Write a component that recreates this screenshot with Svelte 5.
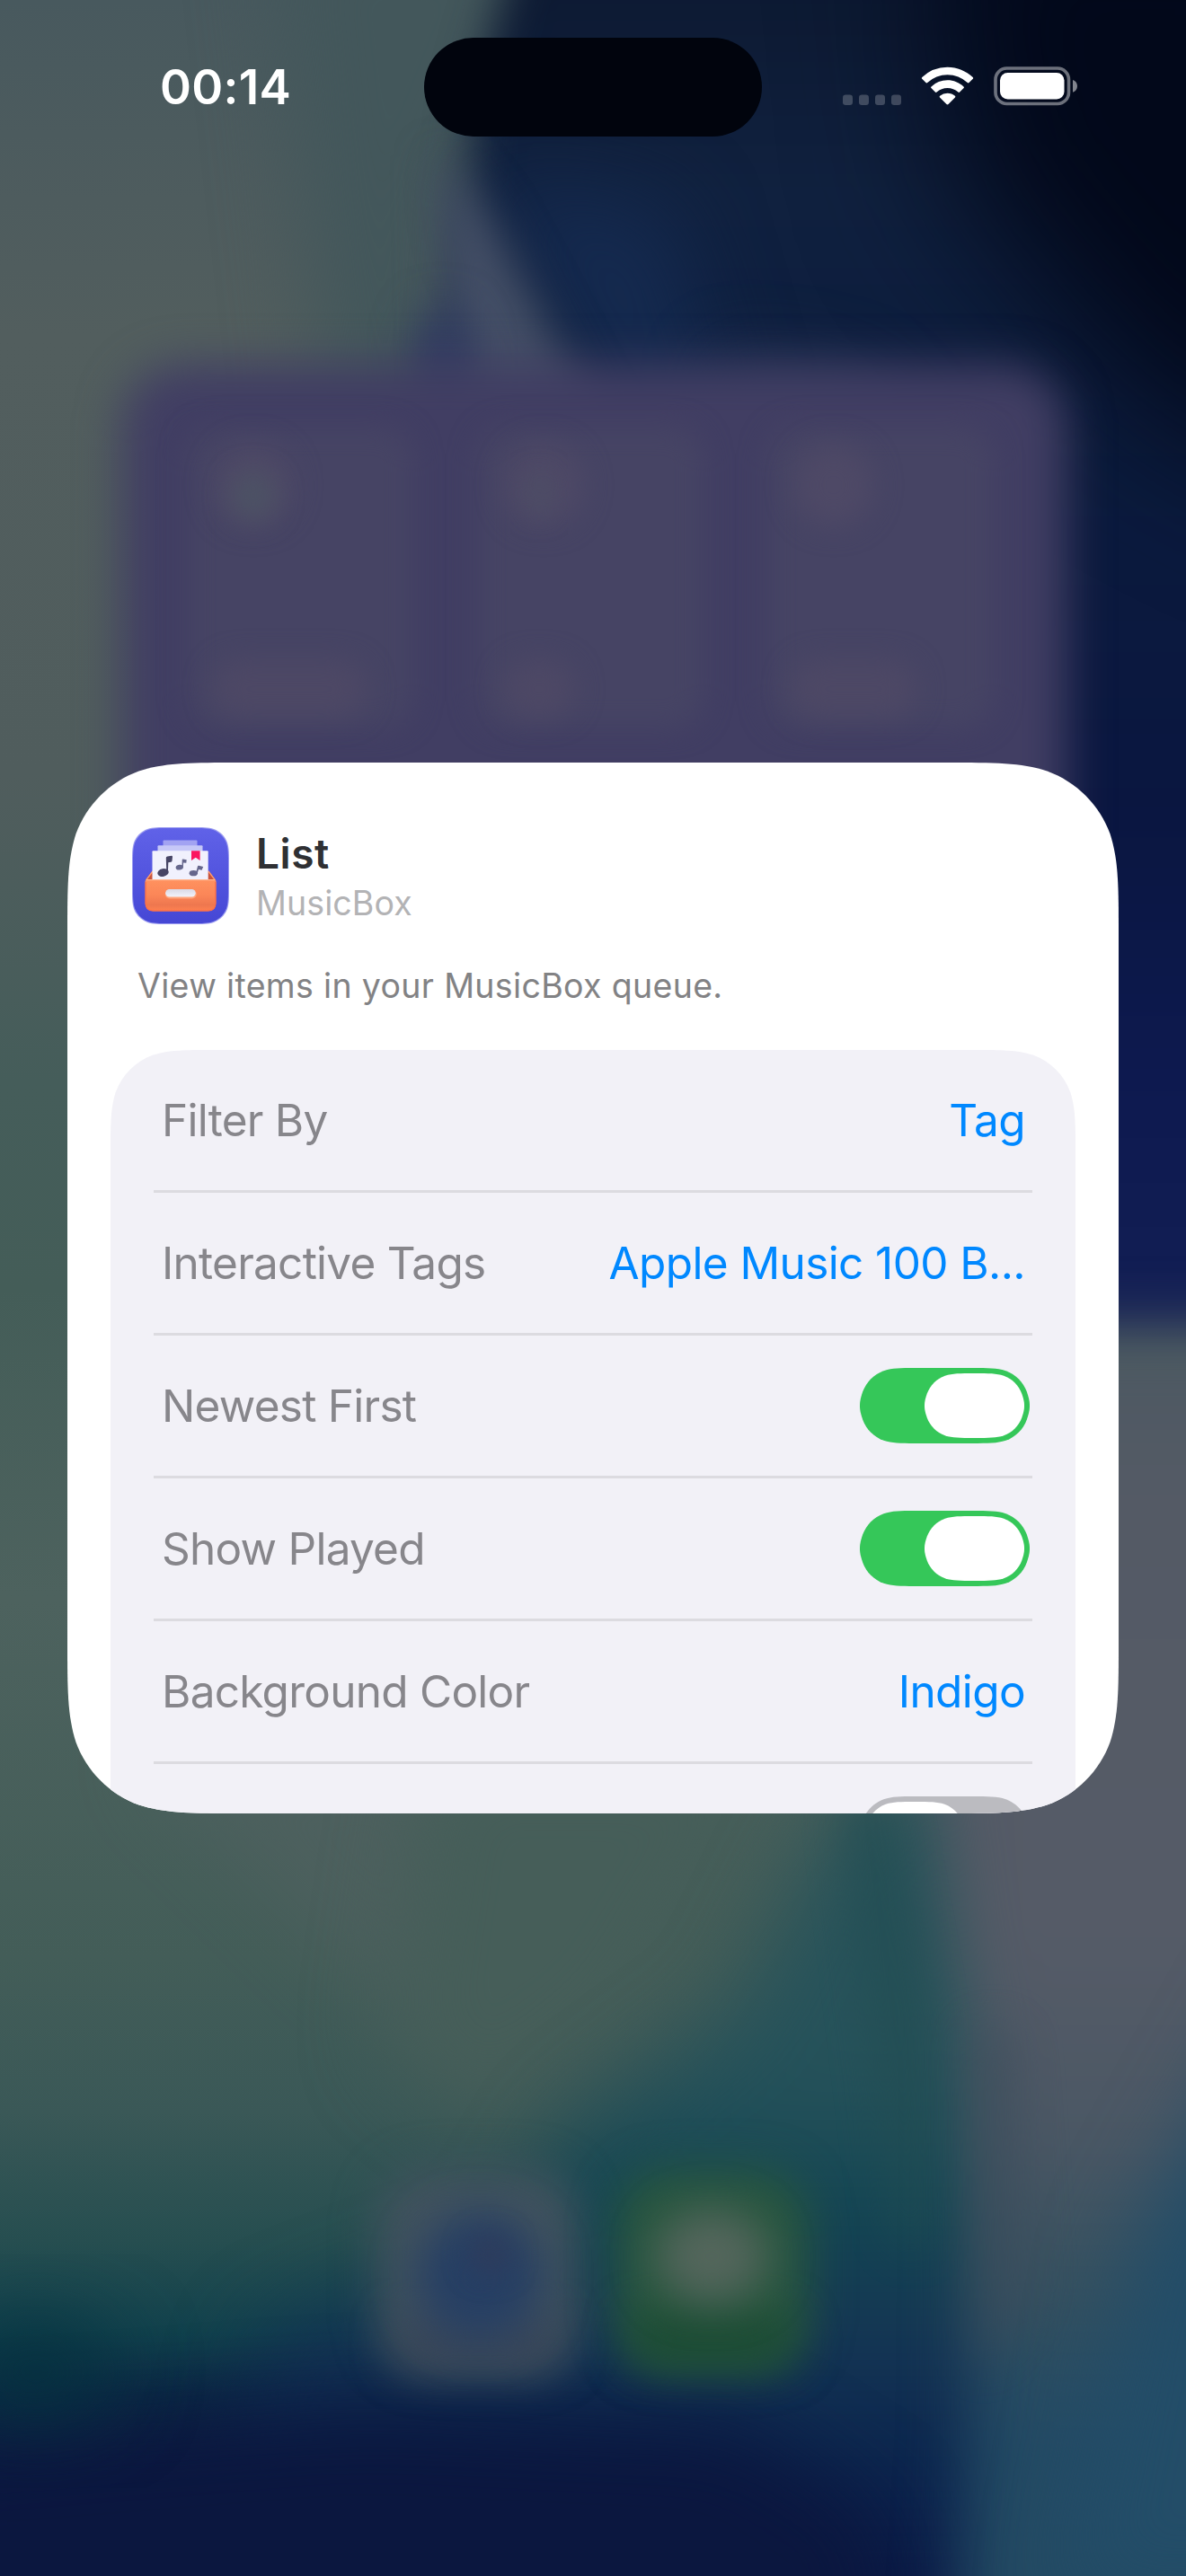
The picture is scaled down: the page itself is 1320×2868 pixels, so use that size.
<script>
  // Continuous-curvature rounded rectangle; the corner easing is shortened
  // on any side that is too short to hold it.
  function squircle(w, h, r, open = false) {
    const ex = Math.min(1.528665 * r, w / 2);
    const ey = Math.min(1.528665 * r, h / 2);
    const mx = Math.min(1.088493 * r, ex * 0.9);
    const my = Math.min(1.088493 * r, ey * 0.93);
    const nx = Math.min(0.868407 * r, mx);
    const ny = Math.min(0.868407 * r, my * 0.92);
    const a = 0.07491 * r;
    const b = 0.631494 * r;
    const c = 0.169059 * r;
    const d = 0.372824 * r;
    const top =
      `M${ex},0 H${w - ex} C${w - mx},0 ${w - nx},0 ${w - b},${a} ` +
      `C${w - d},${c} ${w - c},${d} ${w - a},${b} C${w},${ny} ${w},${my} ${w},${ey} `;
    const bottom = open
      ? `V${h} H0 `
      : `V${h - ey} C${w},${h - my} ${w},${h - ny} ${w - a},${h - b} ` +
        `C${w - c},${h - d} ${w - d},${h - c} ${w - b},${h - a} C${w - nx},${h} ${w - mx},${h} ${w - ex},${h} ` +
        `H${ex} C${mx},${h} ${nx},${h} ${b},${h - a} C${d},${h - c} ${c},${h - d} ${a},${h - b} C0,${h - ny} 0,${h - my} 0,${h - ey} `;
    return top + bottom + `V${ey} C0,${my} 0,${ny} ${a},${b} C${c},${d} ${d},${c} ${b},${a} C${nx},0 ${mx},0 ${ex},0 Z`;
  }

  const cardClip = `path("${squircle(1170, 1170, 126)}")`;
  const panelClip = `path("${squircle(1074, 850, 75, true)}")`;
  const track = squircle(189, 84, 42);
  const knob = squircle(111, 72, 36);

  const rows = [
    { label: 'Filter By', value: 'Tag' },
    { label: 'Interactive Tags', value: 'Apple Music 100 B...' },
    { label: 'Newest First', on: true },
    { label: 'Show Played', on: true },
    { label: 'Background Color', value: 'Indigo' },
    { label: '', on: false }
  ];
  const tiles = [0, 1, 2];
</script>

<div class="phone">
  <svg class="wallpaper" viewBox="0 0 1320 2868" color-interpolation-filters="sRGB" aria-hidden="true">
    <defs>
      <linearGradient id="left" x1="0" y1="0" x2="0" y2="2868" gradientUnits="userSpaceOnUse">
        <stop offset="0" stop-color="#48595e" />
        <stop offset=".13" stop-color="#525e5e" />
        <stop offset=".3" stop-color="#505d5d" />
        <stop offset=".42" stop-color="#455d5a" />
        <stop offset=".5" stop-color="#445d58" />
        <stop offset=".62" stop-color="#4d625e" />
        <stop offset=".76" stop-color="#435d58" />
        <stop offset=".82" stop-color="#3a5857" />
        <stop offset=".87" stop-color="#264e50" />
        <stop offset=".905" stop-color="#12424d" />
        <stop offset=".93" stop-color="#0b2a45" />
        <stop offset=".96" stop-color="#0e1c42" />
        <stop offset="1" stop-color="#0a1645" />
      </linearGradient>
      <linearGradient id="night" x1="0" y1="0" x2="0" y2="1500" gradientUnits="userSpaceOnUse">
        <stop offset="0" stop-color="#0d1a33" />
        <stop offset=".14" stop-color="#10213f" />
        <stop offset=".35" stop-color="#0b1b3d" />
        <stop offset=".6" stop-color="#0a1640" />
        <stop offset=".8" stop-color="#0d194f" />
        <stop offset="1" stop-color="#131f55" />
      </linearGradient>
      <linearGradient id="edge" x1="0" y1="1450" x2="0" y2="2868" gradientUnits="userSpaceOnUse">
        <stop offset="0" stop-color="#4a5861" />
        <stop offset=".15" stop-color="#545a65" />
        <stop offset=".5" stop-color="#555b67" />
        <stop offset=".66" stop-color="#4a5764" />
        <stop offset=".78" stop-color="#34505f" />
        <stop offset=".88" stop-color="#234a64" />
        <stop offset="1" stop-color="#234a63" />
      </linearGradient>
      <linearGradient id="teal" x1="0" y1="2000" x2="0" y2="2868" gradientUnits="userSpaceOnUse">
        <stop offset="0" stop-color="#2a545a" />
        <stop offset=".35" stop-color="#26525a" />
        <stop offset=".55" stop-color="#124452" />
        <stop offset=".7" stop-color="#153554" />
        <stop offset=".82" stop-color="#0c284f" />
        <stop offset="1" stop-color="#0a1b48" />
      </linearGradient>
      <filter id="b14" x="-80%" y="-80%" width="260%" height="260%"><feGaussianBlur stdDeviation="15" /></filter>
      <filter id="b25" x="-80%" y="-80%" width="260%" height="260%"><feGaussianBlur stdDeviation="24" /></filter>
      <filter id="b35" x="-80%" y="-80%" width="260%" height="260%"><feGaussianBlur stdDeviation="34" /></filter>
      <filter id="b45" x="-80%" y="-80%" width="260%" height="260%"><feGaussianBlur stdDeviation="45" /></filter>
      <filter id="b80" x="-80%" y="-80%" width="260%" height="260%"><feGaussianBlur stdDeviation="80" /></filter>
    </defs>
    <rect width="1320" height="2868" fill="url(#left)" />
    <!-- pale green slope -->
    <path d="M300 -100 H640 L500 250 V600 H380 Z" fill="#43575b" filter="url(#b45)" />
    <path d="M150 1950 L500 1950 L560 2300 L400 2200 Z" fill="#506160" opacity=".7" filter="url(#b45)" />
    <path d="M480 1950 H880 L700 2250 L540 2370 L430 2280 Z" fill="#465e59" filter="url(#b45)" />
    <!-- night sky -->
    <path d="M600 -150 L530 100 L510 300 L470 620 V1500 H1480 V-150 Z" fill="url(#night)" filter="url(#b25)" />
    <path d="M1020 -150 H1500 V560 L1280 450 L1060 200 Z" fill="#02081a" filter="url(#b80)" />
    <path d="M540 200 L740 230 L860 620 L720 560 Z" fill="#152a4f" filter="url(#b45)" />
    <path d="M490 170 L545 240 L770 660 H500 Z" fill="#444f66" filter="url(#b25)" />
    <path d="M800 400 L960 430 L1120 640 H840 Z" fill="#273858" filter="url(#b45)" opacity=".9" />
    <ellipse cx="492" cy="400" rx="32" ry="56" fill="#303b62" filter="url(#b25)" />
    <!-- lower right -->
    <path d="M1040 1950 L920 2040 L820 2240 L640 2370 L560 2500 L300 2600 L200 2900 H1200 V1950 Z" fill="url(#teal)" filter="url(#b45)" />
    <path d="M-100 2720 L400 2680 L820 2700 L980 2800 L1000 3000 H-100 Z" fill="#0b173f" filter="url(#b45)" />
    <path d="M1000 1480 H1520 V3050 H1055 L1078 2700 L1082 2300 L1062 2150 L1040 2000 Z" fill="url(#edge)" filter="url(#b35)" />
    <path d="M940 2000 L985 2000 L1030 2250 L1030 2500 L1000 2500 Z" fill="#224d53" opacity=".7" filter="url(#b25)" />
    <path d="M1440 2180 L1260 2500 L1180 2900 H1450 Z" fill="#234d68" filter="url(#b45)" />
    <path d="M1080 2260 L1130 2260 L1150 2560 L1090 2640 Z" fill="#3f4c5c" opacity=".5" filter="url(#b25)" />
    <ellipse cx="40" cy="2640" rx="90" ry="50" fill="#05313f" filter="url(#b45)" />
    <!-- home screen widget -->
    <rect x="135" y="405" width="1053" height="900" rx="70" fill="#413e63" filter="url(#b25)" />
    {#each tiles as i}
      <g transform="translate({i * 323} 0)">
        <rect x="208" y="475" width="252" height="336" rx="36" fill="#464464" filter="url(#b14)" />
        <ellipse cx="282" cy="540" rx="44" ry="46" fill="#4e4966" filter="url(#b14)" />
      </g>
    {/each}
    <ellipse cx="282" cy="552" rx="24" ry="26" fill="#4c5364" filter="url(#b14)" />
    <ellipse cx="600" cy="550" rx="12" ry="22" fill="#4c4f65" filter="url(#b14)" />
    <rect x="236" y="735" width="172" height="64" rx="32" fill="#4d4865" filter="url(#b14)" />
    <rect x="560" y="735" width="80" height="64" rx="32" fill="#4d4865" filter="url(#b14)" />
    <rect x="880" y="735" width="140" height="64" rx="32" fill="#4d4865" filter="url(#b14)" />
    <!-- dock -->
    <rect x="420" y="2415" width="224" height="224" rx="60" fill="#42535e" filter="url(#b25)" />
    <rect x="440" y="2580" width="185" height="55" rx="25" fill="#394558" filter="url(#b25)" />
    <circle cx="534" cy="2535" r="72" fill="#263f64" filter="url(#b25)" />
    <circle cx="545" cy="2510" r="22" fill="#2e3c5c" filter="url(#b14)" />
    <rect x="684" y="2415" width="216" height="222" rx="60" fill="#28563f" filter="url(#b25)" />
    <rect x="700" y="2575" width="184" height="60" rx="25" fill="#1c4c34" filter="url(#b25)" />
    <ellipse cx="792" cy="2512" rx="62" ry="52" fill="#54665c" filter="url(#b25)" />
  </svg>

  <header class="status">
    <span class="time">00:14</span>
    <span class="island"></span>
    <svg class="indicators" viewBox="0 0 264 46" aria-label="Wi-Fi and battery">
      <g fill="#fff" fill-opacity=".21">
        <rect x="1" y="31.5" width="11" height="11.5" rx="3.2" />
        <rect x="19" y="31.5" width="11" height="11.5" rx="3.2" />
        <rect x="37" y="31.5" width="11" height="11.5" rx="3.2" />
        <rect x="55" y="31.5" width="11" height="11.5" rx="3.2" />
      </g>
      <g fill="#fff">
        <path d="M117.5 .8c10.800 0 20.700 4.300 28.200 11.200.6.600.6 1.200.1 1.700l-4.300 4.400c-.5.500-1.200.5-1.700 0a32.400 32.400 0 0 0-44.600 0c-.5.500-1.200.5-1.700 0l-4.300-4.400c-.5-.5-.5-1.100.1-1.700A41.500 41.500 0 0 1 117.500.8Z" />
        <path d="M117.500 15.300c6.900 0 13.200 2.700 18 7.100.6.500.6 1.200.1 1.700l-4.500 4.500c-.5.500-1.100.5-1.700 0a17.600 17.600 0 0 0-23.800 0c-.6.500-1.200.5-1.700 0l-4.500-4.500c-.5-.5-.5-1.200.1-1.700a26.700 26.700 0 0 1 18-7.100Z" />
        <path d="M117.500 29.700c3.200 0 6.100 1.200 8.400 3.100.6.500.6 1.100.1 1.700l-7.500 7.600c-.6.600-1.400.6-2 0l-7.500-7.600c-.5-.6-.5-1.200.1-1.700a13 13 0 0 1 8.400-3.100Z" />
      </g>
      <rect x="171" y="2" width="81.500" height="39.500" rx="12.500" fill="none" stroke="#fff" stroke-opacity=".42" stroke-width="3.600" />
      <rect x="176" y="7" width="71.500" height="29.500" rx="8.500" fill="#fff" />
      <path d="M257 15c3 1 5 3.600 5 6.900s-2 5.800-5 6.800Z" fill="#fff" fill-opacity=".5" />
    </svg>
  </header>

  <main class="card" style:clip-path={cardClip}>
    <div class="app">
      <svg class="icon" viewBox="0 0 108 108" aria-label="MusicBox">
        <defs>
          <linearGradient id="bg" x1="0" y1="0" x2="0" y2="1">
            <stop offset="0" stop-color="#6062e8" />
            <stop offset="1" stop-color="#4547d5" />
          </linearGradient>
          <linearGradient id="box" x1="0" y1="0" x2="0" y2="1">
            <stop offset="0" stop-color="#ff925f" />
            <stop offset=".5" stop-color="#fb8658" />
            <stop offset=".8" stop-color="#ee774f" />
            <stop offset="1" stop-color="#ff8150" />
          </linearGradient>
          <linearGradient id="slot" x1="0" y1="0" x2="0" y2="1">
            <stop offset="0" stop-color="#d9d9e6" />
            <stop offset="1" stop-color="#f3f3fa" />
          </linearGradient>
        </defs>
        <path d={squircle(108, 108, 27)} fill="#9a9bf0" />
        <path d={squircle(106, 106, 26.500)} transform="translate(1 1)" fill="url(#bg)" />
        <rect x="34.500" y="14.500" width="38" height="8" rx="1" fill="#a2a3f2" />
        <rect x="28.500" y="20.300" width="50" height="8" rx="1" fill="#c6c8f7" />
        <path d="M15 59 L23 48.500 H85 L93 59Z" fill="#c9533c" />
        <path d="M15.500 59 L23 49 M92.500 59 L85 49" stroke="#ff9c6c" stroke-width="1.300" />
        <rect x="22.500" y="26.300" width="62.200" height="34" rx="1" fill="#f1f1fd" />
        <path d="M66 26.300h9.600v10.600l-4.800-3.200-4.800 3.200Z" fill="#fb1560" />
        <g fill="#474565">
          <ellipse cx="34.500" cy="50.500" rx="6.300" ry="4.400" transform="rotate(-12 34.500 50.500)" />
          <path d="M38.300 50.500 L37.800 34q0-1.500 1.500-1.600l4.600-.6q1.200 0 1.100 1.300l-.5 4.500q-.1 1-1.200 1.200l-3 .4-.4 11.300Z" />
        </g>
        <g fill="#66678c">
          <ellipse cx="52.800" cy="44.600" rx="4.200" ry="2.900" transform="rotate(-8 52.800 44.600)" />
          <path d="M55.500 44.500 L55.700 36.500q0-1 1-.9l4 .6-.4 3.600-3.200-.2-.3 5Z" />
          <ellipse cx="68.300" cy="51.200" rx="4.700" ry="3.100" />
          <path d="M71 51 L73 43.500q.2-1 1.200-.8l5 1.300-1.600 3.700-3.600-.7-1.500 5Z" />
        </g>
        <path d="M14.500 60.500q0-2.500 2.500-2.500h74q2.500 0 2.500 2.500v24q0 9-9 9h-61q-9 0-9-9Z" fill="url(#box)" />
        <path d="M15.200 61v23.500q0 8.300 8.300 8.300h61q8.300 0 8.300-8.300V61" fill="none" stroke="#ff6f45" stroke-width="1.200" />
        <path d="M16 58.600h76" stroke="#ffb48e" stroke-width="1.200" />
        <rect x="36.800" y="69.500" width="35" height="10" rx="5" fill="#ffa57c" />
        <rect x="37.200" y="69" width="33.500" height="8.600" rx="4.300" fill="url(#slot)" />
      </svg>
      <div class="names">
        <h1>List</h1>
        <p>MusicBox</p>
      </div>
    </div>
    <p class="about">View items in your MusicBox queue.</p>

    <section class="panel" style:clip-path={panelClip}>
      {#each rows as row}
        <div class="row">
          <span class="label">{row.label}</span>
          {#if row.value}
            <span class="value">{row.value}</span>
          {:else}
            <svg class="toggle" viewBox="0 0 189 84" role="switch" aria-checked={row.on} aria-label={row.label || 'Option'}>
              <path d={track} fill={row.on ? '#35c759' : '#bbbbc0'} />
              <path d={knob} transform="translate({row.on ? 72 : 6} 6)" fill="#fff" />
            </svg>
          {/if}
        </div>
      {/each}
    </section>
  </main>
</div>

<style>
  .phone {
    position: relative;
    width: 1320px;
    height: 2868px;
    overflow: hidden;
    font-family: Inter, "Liberation Sans", sans-serif;
  }
  .wallpaper {
    position: absolute;
    inset: 0;
    width: 100%;
    height: 100%;
  }
  .status {
    position: relative;
    display: flex;
    align-items: center;
    box-sizing: border-box;
    height: 194px;
    padding: 0 119px 0 178px;
  }
  .time {
    width: 294px;
    color: #fff;
    font-size: 53px;
    font-weight: 600;
    letter-spacing: 0.3px;
  }
  .island {
    width: 376px;
    height: 110px;
    border-radius: 55px;
    background: #01040d;
  }
  .indicators {
    width: 264px;
    height: 46px;
    margin-left: auto;
  }
  .card {
    position: relative;
    box-sizing: border-box;
    width: 1170px;
    height: 1170px;
    margin: 655px auto 0;
    padding: 72px 48px 0;
    background: #fff;
  }
  .app {
    display: flex;
    gap: 30px;
    height: 108px;
    padding-left: 24px;
  }
  .icon {
    width: 108px;
    height: 108px;
  }
  h1,
  p {
    margin: 0;
  }
  h1 {
    color: #2f3033;
    font-size: 46px;
    font-weight: 600;
    line-height: 58px;
    letter-spacing: 0.6px;
  }
  .names p {
    color: #b3b3b5;
    font-size: 37.5px;
    line-height: 53px;
    letter-spacing: 0.1px;
  }
  .about {
    margin: 44px 0 46px 30px;
    color: #828284;
    font-size: 37.5px;
    line-height: 50px;
    letter-spacing: 0.33px;
  }
  .panel {
    height: 850px;
    padding: 0 48px;
    background: #f2f1f7;
  }
  .row {
    display: flex;
    justify-content: space-between;
    align-items: center;
    box-sizing: border-box;
    height: 159px;
    padding: 0 3px 0 9px;
    border-bottom: 3px solid #dcdbe0;
    font-size: 49.5px;
    white-space: nowrap;
  }
  .label {
    color: #87868b;
    letter-spacing: -0.74px;
  }
  .value {
    padding-right: 5px;
    color: #0088ff;
    letter-spacing: -0.6px;
  }
  .toggle {
    width: 189px;
    height: 84px;
  }
</style>
